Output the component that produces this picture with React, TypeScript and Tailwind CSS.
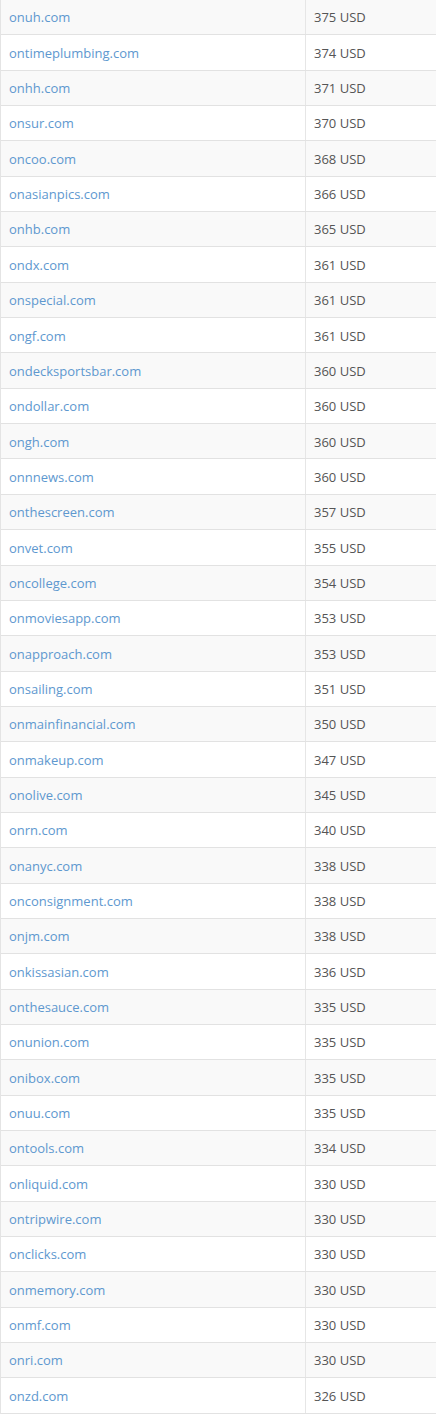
import React from "react";

type Row = { domain: string; price: number };

const rows: Row[] = [
  { domain: "onuh.com", price: 375 },
  { domain: "ontimeplumbing.com", price: 374 },
  { domain: "onhh.com", price: 371 },
  { domain: "onsur.com", price: 370 },
  { domain: "oncoo.com", price: 368 },
  { domain: "onasianpics.com", price: 366 },
  { domain: "onhb.com", price: 365 },
  { domain: "ondx.com", price: 361 },
  { domain: "onspecial.com", price: 361 },
  { domain: "ongf.com", price: 361 },
  { domain: "ondecksportsbar.com", price: 360 },
  { domain: "ondollar.com", price: 360 },
  { domain: "ongh.com", price: 360 },
  { domain: "onnnews.com", price: 360 },
  { domain: "onthescreen.com", price: 357 },
  { domain: "onvet.com", price: 355 },
  { domain: "oncollege.com", price: 354 },
  { domain: "onmoviesapp.com", price: 353 },
  { domain: "onapproach.com", price: 353 },
  { domain: "onsailing.com", price: 351 },
  { domain: "onmainfinancial.com", price: 350 },
  { domain: "onmakeup.com", price: 347 },
  { domain: "onolive.com", price: 345 },
  { domain: "onrn.com", price: 340 },
  { domain: "onanyc.com", price: 338 },
  { domain: "onconsignment.com", price: 338 },
  { domain: "onjm.com", price: 338 },
  { domain: "onkissasian.com", price: 336 },
  { domain: "onthesauce.com", price: 335 },
  { domain: "onunion.com", price: 335 },
  { domain: "onibox.com", price: 335 },
  { domain: "onuu.com", price: 335 },
  { domain: "ontools.com", price: 334 },
  { domain: "onliquid.com", price: 330 },
  { domain: "ontripwire.com", price: 330 },
  { domain: "onclicks.com", price: 330 },
  { domain: "onmemory.com", price: 330 },
  { domain: "onmf.com", price: 330 },
  { domain: "onri.com", price: 330 },
  { domain: "onzd.com", price: 326 },
];

const App: React.FC = () => {
  return (
    <div className="w-[436px] bg-white font-['Open_Sans',sans-serif] text-[13px]">
      <div className="border-l border-[#e4e4e4]">
        {rows.map((r, i) => (
          <div
            key={r.domain}
            className={`flex h-[35.35px] pt-[2px] border-b border-[#e2e2e2] ${
              i % 2 === 0 ? "bg-[#f9f9f9]" : "bg-white"
            }`}
          >
            <div className="w-[305px] flex items-center pl-2 border-r border-[#e6e6e6] -mt-[2px] pt-[2px]">
              <a href="#" className="text-[#5e98cf]">
                {r.domain}
              </a>
            </div>
            <div className="flex-1 flex items-center pl-2 text-[#555]">
              {r.price} USD
            </div>
          </div>
        ))}
      </div>
    </div>
  );
};

export default App;
